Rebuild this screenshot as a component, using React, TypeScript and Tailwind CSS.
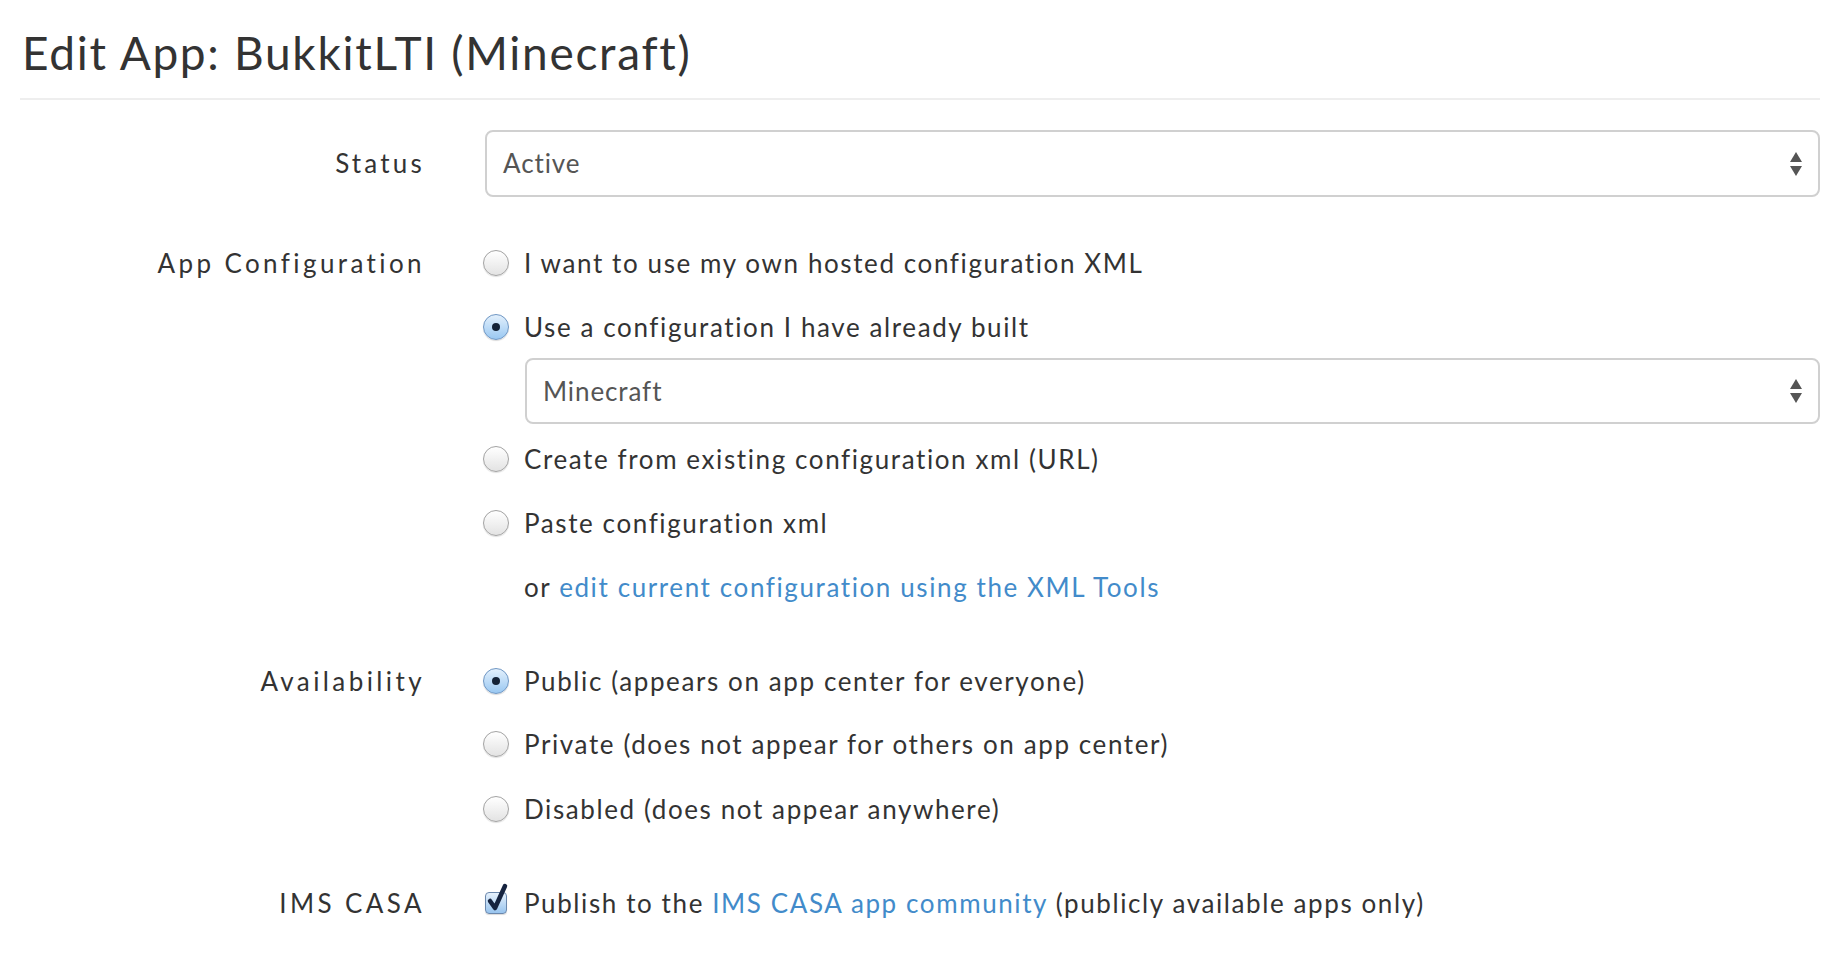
import React from "react";

const font = { fontFamily: "Lato, 'Open Sans', sans-serif" };

function Arrows() {
  return (
    <svg width="14" height="28" viewBox="0 0 14 28" className="absolute right-[15px] top-1/2 -translate-y-1/2">
      <polygon points="1,12 13,12 7,2" fill="#555" />
      <polygon points="1,16 13,16 7,26" fill="#555" />
    </svg>
  );
}

function Select({ value, className }: { value: string; className: string }) {
  return (
    <div
      className={
        "relative flex items-center rounded-[8px] border-2 border-[#d0d0d0] bg-white pl-[16px] text-[26px] tracking-[0.9px] text-[#555] " +
        className
      }
    >
      {value}
      <Arrows />
    </div>
  );
}

function Radio({ checked }: { checked?: boolean }) {
  if (checked) {
    return (
      <span className="relative flex h-[26px] w-[26px] shrink-0 items-center justify-center rounded-full border border-[#6f97c4] bg-[linear-gradient(#e3f0fc,#9ac8f2)] shadow-[0_1px_1px_rgba(0,0,0,0.15)]">
        <span className="h-[8px] w-[8px] rounded-full bg-[#142236]" />
      </span>
    );
  }
  return (
    <span className="h-[26px] w-[26px] shrink-0 rounded-full border border-[#a3a3a3] bg-[linear-gradient(#ffffff,#e3e3e3)] shadow-[0_1px_1px_rgba(0,0,0,0.12)]" />
  );
}

function RadioRow({ checked, children, className = "" }: { checked?: boolean; children: React.ReactNode; className?: string }) {
  return (
    <div className={"flex h-[64px] items-center " + className}>
      <Radio checked={checked} />
      <span className="ml-[15px]">{children}</span>
    </div>
  );
}

function Label({ children }: { children: React.ReactNode }) {
  return (
    <div className="-mr-[3px] flex h-[64px] w-[405px] shrink-0 items-center justify-end tracking-[3.4px] text-[#333]">
      {children}
    </div>
  );
}

export default function App() {
  return (
    <div className="min-h-[956px] w-[1842px] bg-white pl-[20px] text-[26px] tracking-[1.6px] text-[#333]" style={font}>
      <h1 className="pt-[30px] pl-[2px] text-[46px] leading-[46px] font-normal tracking-[1.7px] text-[#333]">
        Edit App: BukkitLTI (Minecraft)
      </h1>
      <div className="mt-[22px] h-[2px] w-[1800px] bg-[#eeeeee]" />

      {/* Status */}
      <div className="mt-[30px] flex">
        <div className="-mr-[3px] flex h-[67px] w-[405px] shrink-0 items-center justify-end tracking-[3.2px]">Status</div>
        <Select value="Active" className="ml-[63px] h-[67px] w-[1335px]" />
      </div>

      {/* App Configuration */}
      <div className="mt-[34px] flex">
        <Label>App Configuration</Label>
        <div className="ml-[61px] flex w-[1337px] flex-col">
          <RadioRow>I want to use my own hosted configuration XML</RadioRow>
          <RadioRow checked>Use a configuration I have already built</RadioRow>
          <Select value="Minecraft" className="ml-[42px] -mt-[1px] h-[66px] w-[1295px]" />
          <RadioRow className="mt-[3px]">Create from existing configuration xml (URL)</RadioRow>
          <RadioRow>Paste configuration xml</RadioRow>
          <div className="flex h-[64px] items-center pl-[41px]">
            or&nbsp;<a className="text-[#428bca]">edit current configuration using the XML Tools</a>
          </div>
        </div>
      </div>

      {/* Availability */}
      <div className="mt-[30px] flex">
        <Label>Availability</Label>
        <div className="ml-[61px] flex flex-col">
          <RadioRow checked>Public (appears on app center for everyone)</RadioRow>
          <RadioRow className="-mt-[1px]">Private (does not appear for others on app center)</RadioRow>
          <RadioRow className="mt-[1px]">Disabled (does not appear anywhere)</RadioRow>
        </div>
      </div>

      {/* IMS CASA */}
      <div className="mt-[30px] flex">
        <Label>IMS CASA</Label>
        <div className="ml-[63px] flex h-[64px] items-center">
          <span className="relative h-[22px] w-[22px] shrink-0 rounded-[4px] border border-[#6b88ad] bg-[linear-gradient(#e6f1fc,#98c4ee)] shadow-[0_1px_1px_rgba(0,0,0,0.15)]">
            <svg width="26" height="30" viewBox="0 0 26 30" className="absolute -left-[1px] -top-[10px]">
              <path d="M5 18 L10 25 L20 3" fill="none" stroke="#15233f" strokeWidth="4.5" strokeLinecap="round" strokeLinejoin="round" />
            </svg>
          </span>
          <span className="ml-[17px]">
            Publish to the <a className="text-[#428bca]">IMS CASA app community</a> (publicly available apps only)
          </span>
        </div>
      </div>
    </div>
  );
}
